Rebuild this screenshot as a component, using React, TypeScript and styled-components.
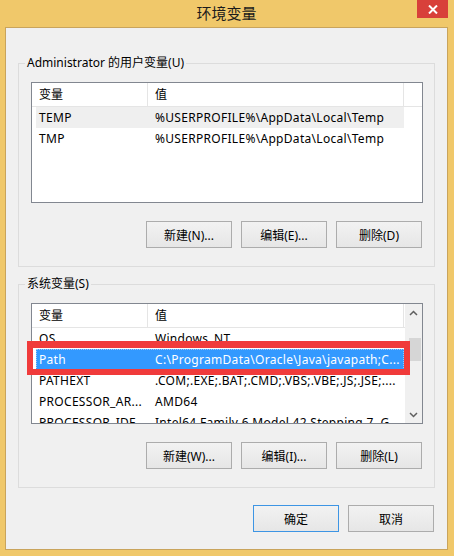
import React from "react";
import styled, { createGlobalStyle } from "styled-components";

const Global = createGlobalStyle`
  html, body { margin: 0; padding: 0; }
  body {
    width: 454px;
    height: 556px;
    overflow: hidden;
    font-family: "Noto Sans", "Noto Sans CJK SC", sans-serif;
  }
  * { box-sizing: border-box; }
`;

const Frame = styled.div`
  width: 454px;
  height: 556px;
  background: #f0c86a;
  padding: 0 6px 6px 5px;
  display: flex;
  flex-direction: column;
`;

const TitleBar = styled.div`
  height: 27px;
  display: grid;
  grid-template-columns: 1fr auto 1fr;
  align-items: start;
`;

const Title = styled.div`
  grid-column: 2;
  font-family: "Noto Sans CJK SC", sans-serif;
  font-size: 15px;
  line-height: 26px;
  color: #1b1b1b;
`;

const CloseButton = styled.div`
  grid-column: 3;
  justify-self: end;
  width: 31px;
  height: 18px;
  background: #d8403a;
  display: flex;
  align-items: center;
  justify-content: center;
`;

const Client = styled.div`
  flex: 1;
  background: #f0f0f0;
  border: 1px solid #c9a45c;
  padding: 27px 12px 17px 12px;
  display: flex;
  flex-direction: column;
`;

const Group = styled.fieldset`
  margin: 0;
  padding: 0;
  min-width: 0;
  border: 1px solid #dcdcdc;
  & + & {
    margin-top: 9px;
  }
`;

const Legend = styled.legend`
  margin-left: 6px;
  padding: 0 2px;
  font-size: 12px;
  line-height: 16px;
  color: #000;
`;

const GroupBody = styled.div`
  padding: 11px 11px 18px 12px;
  display: flex;
  flex-direction: column;
  gap: 18px;
`;

const ListWrap = styled.div`
  position: relative;
`;

const ListBox = styled.div`
  height: 121px;
  border: 1px solid #828790;
  background: #fff;
  display: flex;
  overflow: hidden;
`;

const ListMain = styled.div`
  flex: 1;
  min-width: 0;
  display: flex;
  flex-direction: column;
`;

const HeaderRow = styled.div`
  height: 24px;
  flex: none;
  border-bottom: 1px solid #e5e5e5;
  padding-left: 4px;
  display: flex;
  background: #fff;
`;

const HeaderCell = styled.div<{ $w: number; $pad: number }>`
  width: ${(p) => p.$w}px;
  flex: none;
  padding-left: ${(p) => p.$pad}px;
  border-right: 1px solid #e5e5e5;
  font-size: 12px;
  line-height: 23px;
  color: #000;
`;

const Row = styled.div<{ $state?: "grey" | "selected" }>`
  margin-left: 4px;
  width: 368px;
  height: 21px;
  flex: none;
  display: flex;
  align-items: center;
  background: ${(p) =>
    p.$state === "selected" ? "#3399ff" : p.$state === "grey" ? "#efefef" : "transparent"};
  color: ${(p) => (p.$state === "selected" ? "#fff" : "#000")};
  outline: ${(p) => (p.$state === "selected" ? "1px dotted #9cc9f5" : "none")};
  outline-offset: -1px;
`;

const Cell = styled.div<{ $w: number; $pad: number }>`
  width: ${(p) => p.$w}px;
  flex: none;
  padding-left: ${(p) => p.$pad}px;
  font-size: 12px;
  line-height: 21px;
  letter-spacing: 0.3px;
  white-space: nowrap;
  overflow: hidden;
`;

const ScrollBar = styled.div`
  width: 17px;
  flex: none;
  background: #f0f0f0;
  display: flex;
  flex-direction: column;
  align-items: center;
`;

const ArrowBox = styled.div`
  width: 17px;
  height: 17px;
  display: flex;
  align-items: center;
  justify-content: center;
  flex: none;
`;

const Track = styled.div`
  flex: 1;
  width: 100%;
  display: flex;
  flex-direction: column;
  align-items: center;
  padding-top: 17px;
`;

const Thumb = styled.div`
  width: 12px;
  height: 23px;
  background: #d6d6d6;
  margin-left: 3px;
`;

const Annotation = styled.div`
  position: absolute;
  left: -4px;
  top: 38px;
  width: 383px;
  height: 34px;
  border-style: solid;
  border-color: #f03b3b;
  border-width: 7px 6px 6px 6px;
  pointer-events: none;
`;

const ButtonRow = styled.div<{ $gapTop?: number }>`
  display: flex;
  justify-content: flex-end;
  gap: 9px;
  padding-right: 1px;
  margin-top: ${(p) => p.$gapTop ?? 0}px;
`;

const Button = styled.button<{ $default?: boolean }>`
  width: 86px;
  height: 27px;
  padding: 0;
  margin: 0;
  border: 1px solid ${(p) => (p.$default ? "#3d95e4" : "#acacac")};
  background: linear-gradient(#f2f2f2, #e6e6e6);
  font-family: "Noto Sans", "Noto Sans CJK SC", sans-serif;
  font-size: 12px;
  color: #000;
  border-radius: 0;
`;

const Chevron = ({ up }: { up?: boolean }) => (
  <svg width="9" height="6" viewBox="0 0 9 6">
    <path
      d={up ? "M1 5 L4.5 1.5 L8 5" : "M1 1 L4.5 4.5 L8 1"}
      fill="none"
      stroke="#5f5f5f"
      strokeWidth="1.5"
    />
  </svg>
);

type Item = { name: string; value: string; state?: "grey" | "selected" };

const userVars: Item[] = [
  { name: "TEMP", value: "%USERPROFILE%\\AppData\\Local\\Temp", state: "grey" },
  { name: "TMP", value: "%USERPROFILE%\\AppData\\Local\\Temp" },
];

const sysVars: Item[] = [
  { name: "OS", value: "Windows_NT" },
  { name: "Path", value: "C:\\ProgramData\\Oracle\\Java\\javapath;C...", state: "selected" },
  { name: "PATHEXT", value: ".COM;.EXE;.BAT;.CMD;.VBS;.VBE;.JS;.JSE;...." },
  { name: "PROCESSOR_AR...", value: "AMD64" },
  { name: "PROCESSOR_IDE...", value: "Intel64 Family 6 Model 42 Stepping 7, G..." },
];

const ListView = ({ items, scroll }: { items: Item[]; scroll?: boolean }) => (
  <ListBox>
    <ListMain>
      <HeaderRow>
        <HeaderCell $w={112} $pad={3}>变量</HeaderCell>
        <HeaderCell $w={256} $pad={7}>值</HeaderCell>
      </HeaderRow>
      {items.map((it) => (
        <Row key={it.name} $state={it.state}>
          <Cell $w={112} $pad={3}>{it.name}</Cell>
          <Cell $w={256} $pad={7}>{it.value}</Cell>
        </Row>
      ))}
    </ListMain>
    {scroll && (
      <ScrollBar>
        <ArrowBox>
          <Chevron up />
        </ArrowBox>
        <Track>
          <Thumb />
        </Track>
        <ArrowBox>
          <Chevron />
        </ArrowBox>
      </ScrollBar>
    )}
  </ListBox>
);

export default function App() {
  return (
    <>
      <Global />
      <Frame>
        <TitleBar>
          <Title>环境变量</Title>
          <CloseButton>
            <svg width="10" height="9" viewBox="0 0 10 9">
              <path d="M1 0.5 L9 8.5 M9 0.5 L1 8.5" stroke="#fff" strokeWidth="2" />
            </svg>
          </CloseButton>
        </TitleBar>
        <Client>
          <Group>
            <Legend>Administrator 的用户变量(U)</Legend>
            <GroupBody>
              <ListWrap>
                <ListView items={userVars} />
              </ListWrap>
              <ButtonRow>
                <Button>新建(N)...</Button>
                <Button>编辑(E)...</Button>
                <Button>删除(D)</Button>
              </ButtonRow>
            </GroupBody>
          </Group>
          <Group>
            <Legend>系统变量(S)</Legend>
            <GroupBody>
              <ListWrap>
                <ListView items={sysVars} scroll />
                <Annotation />
              </ListWrap>
              <ButtonRow>
                <Button>新建(W)...</Button>
                <Button>编辑(I)...</Button>
                <Button>删除(L)</Button>
              </ButtonRow>
            </GroupBody>
          </Group>
          <ButtonRow $gapTop={17}>
            <Button $default>确定</Button>
            <Button>取消</Button>
          </ButtonRow>
        </Client>
      </Frame>
    </>
  );
}
